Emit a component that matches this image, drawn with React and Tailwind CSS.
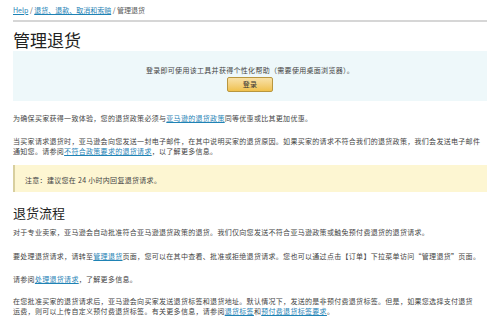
import React from "react";

const link = "text-[#1f83b5] underline";

export default function App() {
  return (
    <div className="w-[499px] h-[322px] overflow-hidden bg-white px-[13px] pt-[5px] text-[7px] leading-[10px] tracking-[0.3px] text-[#444]" style={{ fontFamily: '"Noto Sans CJK SC", "Noto Sans", sans-serif' }}>
      <div className="w-[474px]">
        <div className="text-[#555] tracking-normal">
          <a className={link}>Help</a> / <a className={link}>退货、退款、取消和索赔</a> / 管理退货
        </div>
        <div className="mt-[5px] h-[2px] bg-[#d6d6d6]" />
        <h1 className="mt-[7px] text-[17px] leading-[22px] tracking-normal text-[#222]">管理退货</h1>

        <div className="bg-[#eef8fa] pt-[14px] pb-[9px] flex flex-col items-center">
          <div>登录即可使用该工具并获得个性化帮助（需要使用桌面浏览器）。</div>
          <button className="mt-[2px] h-[15px] w-[46px] rounded-[2px] border border-[#b8963e] bg-gradient-to-b from-[#f8e2a8] to-[#f0c14b] text-[7px] leading-[13px] text-[#333]">
            登录
          </button>
        </div>

        <div className="pr-[4px]">
          <p className="mt-[12px]">
            为确保买家获得一致体验，您的退货政策必须与<a className={link}>亚马逊的退货政策</a>同等优惠或比其更加优惠。
          </p>
          <p className="mt-[13px]">
            当买家请求退货时，亚马逊会向您发送一封电子邮件，在其中说明买家的退货原因。如果买家的请求不符合我们的退货政策，我们会发送电子邮件通知您。请参阅<a className={link}>不符合政策要求的退货请求</a>，以了解更多信息。
          </p>
        </div>

        <div className="mt-[9px] border-l-2 border-[#d8cf9f] bg-[#fdf6d2] pl-[10px] pt-[10px] pb-[7px]">
          注意：建议您在 24 小时内回复退货请求。
        </div>

        <h2 className="mt-[12px] text-[13px] leading-[18px] tracking-normal text-[#222]">退货流程</h2>
        <div className="pr-[4px]">
          <p className="mt-[5px]">
            对于专业卖家，亚马逊会自动批准符合亚马逊退货政策的退货。我们仅向您发送不符合亚马逊政策或触免预付费退货的退货请求。
          </p>
          <p className="mt-[14px]">
            要处理退货请求，请转至<a className={link}>管理退货</a>页面，您可以在其中查看、批准或拒绝退货请求。您也可以通过点击【订单】下拉菜单访问“管理退货”页面。
          </p>
          <p className="mt-[13px]">
            请参阅<a className={link}>处理退货请求</a>，了解更多信息。
          </p>
          <p className="mt-[12px] pr-[4px]">
            在您批准买家的退货请求后，亚马逊会向买家发送退货标签和退货地址。默认情况下，发送的是非预付费退货标签。但是，如果您选择支付退货运费，则可以上传自定义预付费退货标签。有关更多信息，请参阅<a className={link}>退货标签</a>和<a className={link}>预付费退货标签要求</a>。
          </p>
        </div>
      </div>
    </div>
  );
}
